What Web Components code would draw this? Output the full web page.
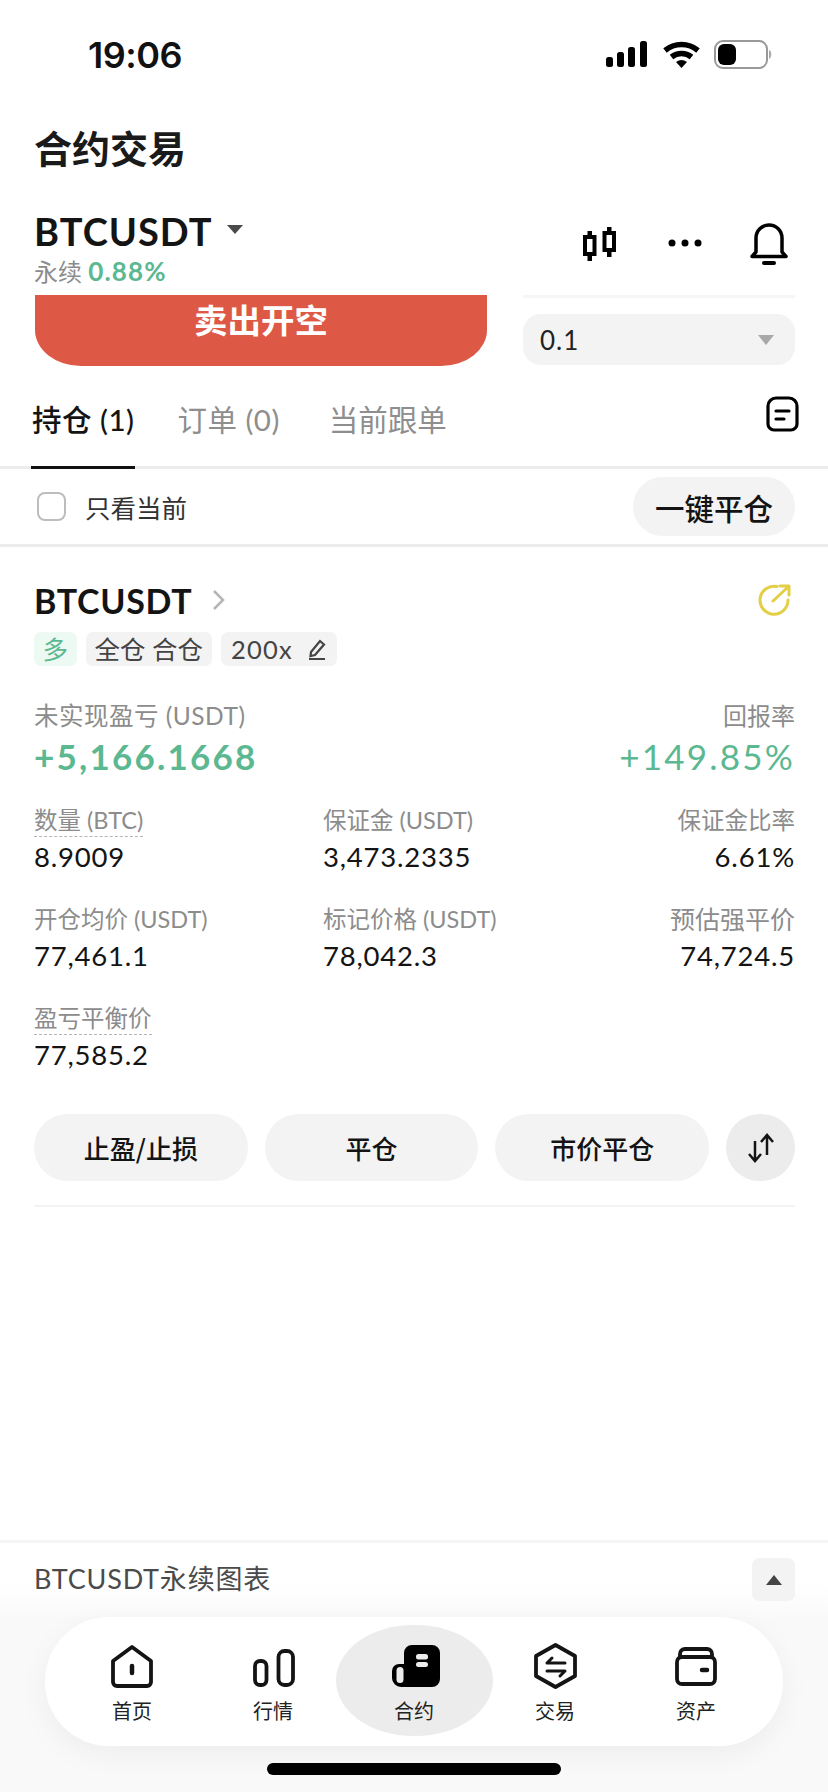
<!DOCTYPE html>
<html lang="zh">
<head>
<meta charset="utf-8">
<title>合约交易</title>
<style>
  html, body { margin: 0; padding: 0; }
  body {
    width: 828px;
    height: 1792px;
    display: flex;
    flex-direction: column;
    overflow: hidden;
    background: #fff;
    color: #141414;
    font-family: Lato, "Noto Sans CJK SC", sans-serif;
  }
  .grow { flex: 1; }
</style>
</head>
<body>
  <status-bar time="19:06"></status-bar>
  <page-title>合约交易</page-title>
  <symbol-bar symbol="BTCUSDT" kind="永续" change="0.88%"></symbol-bar>
  <order-strip action="卖出开空" qty="0.1"></order-strip>
  <tab-bar></tab-bar>
  <filter-row></filter-row>
  <position-card>
    <stat-cell label="数量 (BTC)" value="8.9009" dashed></stat-cell>
    <stat-cell label="保证金 (USDT)" value="3,473.2335"></stat-cell>
    <stat-cell label="保证金比率" value="6.61%" right></stat-cell>
    <stat-cell label="开仓均价 (USDT)" value="77,461.1"></stat-cell>
    <stat-cell label="标记价格 (USDT)" value="78,042.3"></stat-cell>
    <stat-cell label="预估强平价" value="74,724.5" right style="--label-size:25px"></stat-cell>
    <stat-cell label="盈亏平衡价" value="77,585.2" dashed></stat-cell>
  </position-card>
  <div class="grow"></div>
  <chart-bar>BTCUSDT永续图表</chart-bar>
  <bottom-nav>
    <nav-item icon="home">首页</nav-item>
    <nav-item icon="market">行情</nav-item>
    <nav-item icon="futures" active>合约</nav-item>
    <nav-item icon="trade">交易</nav-item>
    <nav-item icon="assets">资产</nav-item>
  </bottom-nav>

<script>
const RESET = `:host, * { margin: 0; padding: 0; box-sizing: border-box; }`;

class StatusBar extends HTMLElement {
    connectedCallback() {
        this.attachShadow({mode: "open"}).innerHTML = `
        <style>
            ${RESET}
            :host { display: flex; height: 100px; align-items: center; justify-content: space-between; padding: 10px 53px 0 88px; }
            span { font: 600 36px/40px Inter, "Liberation Sans", sans-serif; color: #111; letter-spacing: -0.5px; }
            svg { display: block; }
        </style>
        <span>${this.getAttribute("time")}</span>
        <svg width="170" height="32" viewBox="0 0 170 32">
            <rect x="1" y="18" width="7" height="10" rx="2.5"/>
            <rect x="12" y="13" width="7" height="15" rx="2.5"/>
            <rect x="23" y="8" width="7" height="20" rx="2.5"/>
            <rect x="35" y="2" width="7" height="26" rx="2.5"/>
            <path d="M60 11.5a26 26 0 0 1 33 0" fill="none" stroke="#000" stroke-width="5.5"/>
            <path d="M66.500 18a16 16 0 0 1 20 0" fill="none" stroke="#000" stroke-width="5.500"/>
            <path d="M71 23a9 9 0 0 1 11 0l-5.500 6z"/>
            <rect x="110" y="2" width="52" height="27" rx="8" fill="none" stroke="#999" stroke-width="2"/>
            <rect x="113" y="5" width="18" height="21" rx="6"/>
            <path d="M164 11c3 .5 3 8 0 9z" fill="#aaa"/>
        </svg>`;
    }
}

class PageTitle extends HTMLElement {
    constructor() {
        super();
        this.attachShadow({mode: "open"}).innerHTML = `
        <style>
            ${RESET}
            :host { display: block; height: 90px; padding: 26px 34px 0; font-size: 38px; line-height: 44px; font-weight: 700; color: #1a1a1a; }
        </style>
        <slot></slot>`;
    }
}

class SymbolBar extends HTMLElement {
    connectedCallback() {
        this.attachShadow({mode: "open"}).innerHTML = `
        <style>
            ${RESET}
            :host { display: flex; height: 105px; justify-content: space-between; padding: 19px 34px 0; }
            .name { display: flex; align-items: center; gap: 14px; font-size: 38px; line-height: 44px; font-weight: 700; color: #141414; letter-spacing: 1px; }
            .name i { width: 0; height: 0; border: 8px solid transparent; border-top: 9px solid #4a4a4a; border-bottom: 0; margin-top: -4px; }
            .sub { font-size: 24px; line-height: 30px; color: #8c8c8c; margin-top: 3px; }
            .sub b { color: #5bb891; font-size: 26px; font-weight: 700; letter-spacing: 1.200px; }
            .icons { display: flex; align-items: flex-start; padding-top: 12px; margin-right: 5px; }
            svg { display: block; }
        </style>
        <div>
            <div class="name">${this.getAttribute("symbol")}<i></i></div>
            <div class="sub">${this.getAttribute("kind")} <b>${this.getAttribute("change")}</b></div>
        </div>
        <div class="icons">
            <svg width="36" height="44" viewBox="0 0 36 44" fill="none" stroke="#000" stroke-width="4" style="margin:2px 49px 0 1px">
                <rect x="3" y="14" width="9.500" height="17"/><path d="M7.750 8v6M7.750 31v7" stroke-width="4.500"/>
                <rect x="22.500" y="10" width="9.500" height="17"/><path d="M27.250 4v6M27.250 27v7" stroke-width="4.500"/>
            </svg>
            <svg width="36" height="44" viewBox="0 0 36 44" style="margin-right:46px">
                <circle cx="5" cy="22" r="3.500"/><circle cx="18" cy="22" r="3.500"/><circle cx="31" cy="22" r="3.500"/>
            </svg>
            <svg width="40" height="44" viewBox="0 0 40 44" fill="none" stroke="#000" stroke-width="3.500" stroke-linecap="round" stroke-linejoin="round">
                <path d="M7 31V17a13 13 0 0 1 26 0v14l4 4.500H3z"/>
                <path d="M15 42h10" stroke-width="4"/>
            </svg>
        </div>`;
    }
}

class OrderStrip extends HTMLElement {
    connectedCallback() {
        this.attachShadow({mode: "open"}).innerHTML = `
        <style>
            ${RESET}
            :host { display: flex; height: 88px; justify-content: space-between; padding: 0 33px 0 35px; }
            .sell { width: 452px; height: 71px; background: #de5846; color: #fff; border-radius: 0 0 46px 46px / 0 0 36px 36px; font-size: 33.500px; font-weight: 700; line-height: 50px; text-align: center; }
            .side { width: 272px; border-top: 3px solid #f6f6f6; padding-top: 16px; }
            .qty { height: 51px; background: #f3f3f3; border-radius: 18px; display: flex; align-items: center; justify-content: space-between; padding: 0 21px 0 17px; font-size: 26px; color: #222; letter-spacing: 1px; }
            .qty i { width: 0; height: 0; border: 8px solid transparent; border-top: 10px solid #a8a8a8; border-bottom: 0; }
        </style>
        <div class="sell">${this.getAttribute("action")}</div>
        <div class="side"><div class="qty"><span>${this.getAttribute("qty")}</span><i></i></div></div>`;
    }
}

class TabBar extends HTMLElement {
    constructor() {
        super();
        this.attachShadow({mode: "open"}).innerHTML = `
        <style>
            ${RESET}
            :host { display: flex; height: 86px; align-items: stretch; gap: 41px; padding: 0 30px 0 31px; border-bottom: 3px solid #ececec; font-size: 29.500px; color: #8e8e8e; position: relative; }
            div.tab { padding: 16px 1px 0; line-height: 42px; height: 86px; white-space: nowrap; letter-spacing: .5px; }
            .on { color: #141414; font-weight: 500; border-bottom: 3px solid #111; }
            svg { position: absolute; right: 29px; top: 13px; }
        </style>
        <div class="tab on">持仓 (1)</div>
        <div class="tab">订单 (0)</div>
        <div class="tab" style="margin-left:6px;letter-spacing:0">当前跟单</div>
        <svg width="33" height="36" viewBox="0 0 33 36" fill="none" stroke="#000" stroke-width="3.200" stroke-linecap="round">
            <path d="M10 2h13a8 8 0 0 1 8 8v18a6 6 0 0 1-6 6H8a6 6 0 0 1-6-6V10a8 8 0 0 1 8-8z"/>
            <path d="M10 15h13M10 23h8"/>
        </svg>`;
    }
}

class FilterRow extends HTMLElement {
    constructor() {
        super();
        this.attachShadow({mode: "open"}).innerHTML = `
        <style>
            ${RESET}
            :host { display: flex; height: 78px; align-items: center; justify-content: space-between; padding: 0 33px 0 37px; border-bottom: 3px solid #ececec; }
            label { display: flex; align-items: center; gap: 19px; font-size: 25.500px; color: #333; }
            i { display: block; width: 29px; height: 29px; border: 2px solid #bdbdbd; border-radius: 8px; }
            button { width: 162px; height: 59px; border: 0; border-radius: 30px; background: #f3f3f3; font: 500 29.500px "Noto Sans CJK SC", sans-serif; color: #141414; margin-top: 0; }
        </style>
        <label><i></i>只看当前</label>
        <button>一键平仓</button>`;
    }
}

class StatCell extends HTMLElement {
    connectedCallback() {
        const dashed = this.hasAttribute("dashed");
        this.attachShadow({mode: "open"}).innerHTML = `
        <style>
            ${RESET}
            :host { display: block; }
            :host([right]) { text-align: right; }
            .label { height: 34px; line-height: 33px; font-size: var(--label-size, 23.5px); color: #8c8c8c; white-space: nowrap; }
            .label span { display: inline-block; height: 33px; ${dashed ? "border-bottom: 1.500px dashed #b5b5b5;" : ""} }
            .value { height: 38px; line-height: 38px; font-size: 27.500px; color: #141414; letter-spacing: .8px; }
        </style>
        <div class="label"><span>${this.getAttribute("label")}</span></div>
        <div class="value">${this.getAttribute("value")}</div>`;
    }
}

class PositionCard extends HTMLElement {
    constructor() {
        super();
        this.attachShadow({mode: "open"}).innerHTML = `
        <style>
            ${RESET}
            :host { display: block; margin: 0 33px 0 34px; padding-top: 34px; padding-bottom: 24px; border-bottom: 2px solid #f3f3f3; }
            .head { display: flex; align-items: center; justify-content: space-between; height: 38px; }
            .sym { display: flex; align-items: center; gap: 20px; font-size: 34px; font-weight: 700; color: #141414; letter-spacing: .7px; }
            .share { margin-right: 4px; }
            .tags { display: flex; gap: 9px; margin-top: 13px; height: 34px; }
            .tag { background: #f3f3f3; border-radius: 7px; padding: 0 9px; font-size: 25.500px; line-height: 34px; color: #444; display: flex; align-items: center; gap: 12px; }
            .tag.num { letter-spacing: 1.200px; padding: 0 10px; gap: 14px; }
            .tag.long { background: #edf9f3; color: #5bb891; padding: 0 8.5px; }
            .pnl { display: flex; justify-content: space-between; margin-top: 33px; }
            .pnl .k { font-size: 24px; line-height: 34px; color: #8c8c8c; }
            .pnl .k.big { font-size: 24.500px; letter-spacing: .5px; }
            .pnl .v { font-size: 35px; line-height: 38px; color: #5bb891; margin-top: 4px; letter-spacing: 2.200px; }
            .pnl .right { text-align: right; }
            .pnl .bold { font-weight: 700; }
            .stats { display: grid; grid-template-columns: 289px 1fr auto; row-gap: 27px; margin-top: 29px; }
            .actions { display: flex; gap: 17px; margin-top: 40px; }
            .actions button { flex: 1; height: 67px; border: 0; border-radius: 34px; background: #f3f3f3; font: 500 26px "Noto Sans CJK SC", sans-serif; color: #141414; }
            .actions .swap { flex: none; width: 69px; background: #ececec; display: flex; align-items: center; justify-content: center; }
            svg { display: block; }
        </style>
        <div class="head">
            <div class="sym">BTCUSDT
                <svg width="14" height="22" viewBox="0 0 14 22" fill="none" stroke="#b5b5b5" stroke-width="2.500"><path d="M2 2l9 9-9 9"/></svg>
            </div>
            <svg class="share" width="34" height="34" viewBox="0 0 34 34" fill="none" stroke="#e3cf45" stroke-width="3" stroke-linecap="round" stroke-linejoin="round">
                <path d="M20 3.500A14 14 0 1 0 31 17"/><path d="M16 18L31 4M23 3h9v9"/>
            </svg>
        </div>
        <div class="tags">
            <div class="tag long">多</div>
            <div class="tag">全仓 合仓</div>
            <div class="tag num">200x
                <svg width="20" height="24" viewBox="0 0 20 24" fill="none" stroke="#444" stroke-width="2.200"><path d="M4 15L13 4l4 3.500L8 18l-4.500 1zM2 22h16"/></svg>
            </div>
        </div>
        <div class="pnl">
            <div>
                <div class="k big">未实现盈亏 (USDT)</div>
                <div class="v bold">+5,166.1668</div>
            </div>
            <div class="right">
                <div class="k">回报率</div>
                <div class="v">+149.85%</div>
            </div>
        </div>
        <div class="stats"><slot></slot></div>
        <div class="actions">
            <button>止盈/止损</button>
            <button>平仓</button>
            <button>市价平仓</button>
            <button class="swap">
                <svg width="30" height="30" viewBox="0 0 30 30" fill="none" stroke="#141414" stroke-width="2.500"><path d="M9 8v20M3 21l6 7 6-7M21 22V2M15 9l6-7 6 7"/></svg>
            </button>
        </div>`;
    }
}

class ChartBar extends HTMLElement {
    constructor() {
        super();
        this.attachShadow({mode: "open"}).innerHTML = `
        <style>
            ${RESET}
            :host { display: flex; height: 77px; align-items: flex-start; justify-content: space-between; padding: 15px 33px 0 34px; border-top: 3px solid #f5f5f5; font-size: 27px; line-height: 42px; color: #4a4a4a; letter-spacing: .8px; background: linear-gradient(#fff 50%, #fafafa); }
            div { width: 43px; height: 43px; background: #f3f3f3; border-radius: 7px; display: flex; align-items: center; justify-content: center; }
            i { width: 0; height: 0; border: 8px solid transparent; border-bottom: 10px solid #444; border-top: 0; }
        </style>
        <span><slot></slot></span>
        <div><i></i></div>`;
    }
}

const NAV_ICONS = {
    home: `<path d="M24 5L43 19v21a4 4 0 0 1-4 4H9a4 4 0 0 1-4-4V19z"/><path d="M24 24v7" stroke-width="4.500"/>`,
    market: `<rect x="6" y="19" width="11.500" height="24" rx="5"/><rect x="29.500" y="9" width="14.500" height="34" rx="6"/>`,
    futures: `<g transform="translate(2 0)"><path d="M20 3h20a8 8 0 0 1 8 8v26a8 8 0 0 1-8 8H9a9 9 0 0 1-9-9V29a7 7 0 0 1 7-7h5V11a8 8 0 0 1 8-8z" fill="#000" stroke="none"/>
              <rect x="4.500" y="25" width="7" height="16" rx="3.500" fill="#ececec" stroke="none"/>
              <rect x="24" y="12" width="12" height="5.500" rx="2.500" fill="#ececec" stroke="none"/>
              <rect x="24" y="20" width="12" height="5" rx="2.500" fill="#ececec" stroke="none"/></g>`,
    trade: `<path d="M24.500 3L44 14v20L24.500 45 5 34V14z"/><path d="M16 21h18M21 16l-5 5M34 29H16M29 34l5-5" stroke-width="3"/>`,
    assets: `<rect x="5" y="15" width="38" height="27" rx="5"/><path d="M8 15v-3a5 5 0 0 1 5-5h22a5 5 0 0 1 5 5v3"/><path d="M30 28h5" stroke-width="4.500"/>`
};

class NavItem extends HTMLElement {
    connectedCallback() {
        this.attachShadow({mode: "open"}).innerHTML = `
        <style>
            ${RESET}
            :host { display: flex; flex-direction: column; align-items: center; height: 111px; padding-top: 17px; }
            :host([active]) { margin: 0 -8px; background: #ececec; border-radius: 78px / 56px; }
            svg { display: block; overflow: visible; }
            div { font-size: 20px; line-height: 26px; margin-top: 8px; color: #222; }
        </style>
        <svg width="48" height="48" viewBox="0 0 48 48" fill="none" stroke="#141414" stroke-width="3.800" stroke-linejoin="round" stroke-linecap="round">${NAV_ICONS[this.getAttribute("icon")]}</svg>
        <div><slot></slot></div>`;
    }
}

class BottomNav extends HTMLElement {
    constructor() {
        super();
        this.attachShadow({mode: "open"}).innerHTML = `
        <style>
            ${RESET}
            :host { display: block; height: 175px; background: #f9f9f9; position: relative; }
            .pill { margin: 0 45px; height: 129px; background: #fff; border-radius: 64px; box-shadow: 0 8px 30px rgba(0,0,0,.05); display: grid; grid-template-columns: repeat(5, 141px); justify-content: center; padding-top: 8px; }
            .home { width: 294px; height: 12px; background: #000; border-radius: 6px; margin: 17px auto 0; }
        </style>
        <div class="pill"><slot></slot></div>
        <div class="home"></div>`;
    }
}

customElements.define("status-bar", StatusBar);
customElements.define("page-title", PageTitle);
customElements.define("symbol-bar", SymbolBar);
customElements.define("order-strip", OrderStrip);
customElements.define("tab-bar", TabBar);
customElements.define("filter-row", FilterRow);
customElements.define("stat-cell", StatCell);
customElements.define("position-card", PositionCard);
customElements.define("chart-bar", ChartBar);
customElements.define("nav-item", NavItem);
customElements.define("bottom-nav", BottomNav);
</script>
</body>
</html>
